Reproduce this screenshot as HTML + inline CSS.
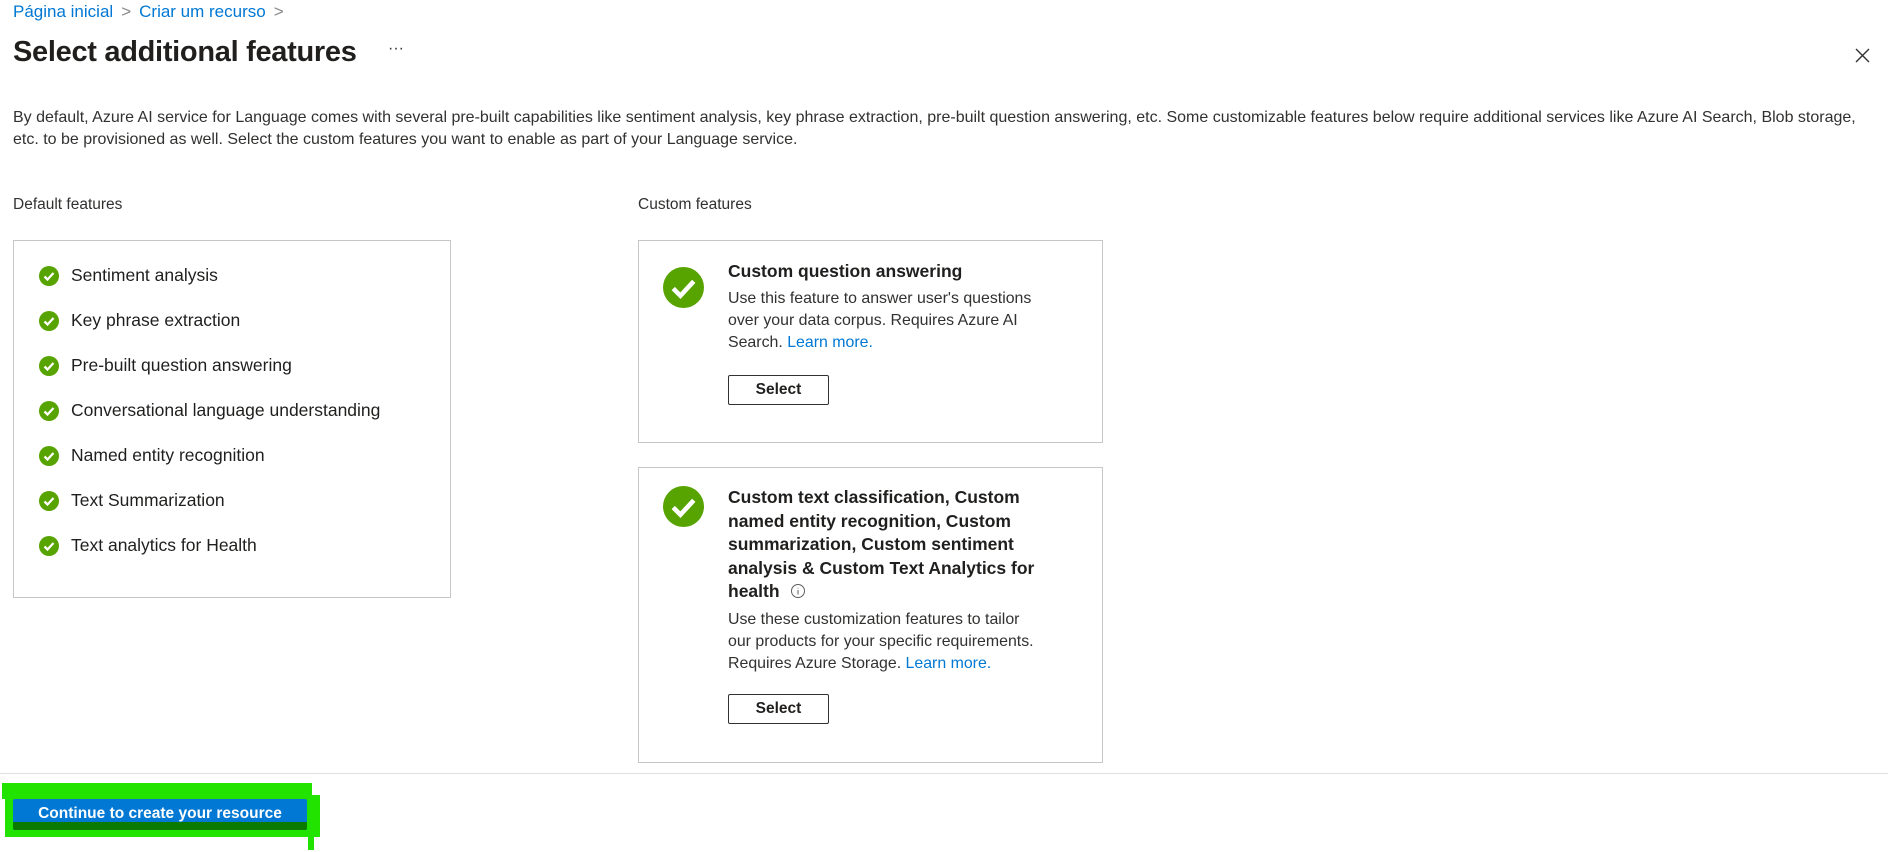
<!DOCTYPE html>
<html><head><meta charset="utf-8"><style>
*{margin:0;padding:0;box-sizing:border-box}
body{width:1888px;height:852px;background:#fff;font-family:"Liberation Sans",sans-serif;color:#323130;position:relative;overflow:hidden}
.a{position:absolute;white-space:nowrap}
.bc{top:2px;left:13px;font-size:17px;color:#0078d4}
.bc span{color:#8a8886;margin:0 8px}
h1{position:absolute;left:13px;top:36px;font-size:29px;font-weight:600;color:#201f1e;letter-spacing:-0.3px}
.desc{position:absolute;left:13px;top:107px;font-size:16px;line-height:22px;color:#323130;white-space:nowrap}
.box{position:absolute;border:1px solid #c8c6c4}
.item{position:absolute;left:71px;font-size:17.5px;color:#201f1e}
.ct{position:absolute;left:728px;font-size:17.5px;font-weight:600;color:#201f1e;line-height:23.5px;white-space:nowrap}
.cb{position:absolute;left:728px;font-size:15.9px;line-height:22px;color:#323130;white-space:nowrap}
.lnk{color:#0078d4}
.sel{position:absolute;left:728px;width:101px;height:30px;border:1px solid #323130;border-radius:2px;font-size:15.5px;font-weight:600;text-align:center;line-height:28px;color:#201f1e}
</style></head><body>
<div class="a bc">Página inicial<span>&gt;</span>Criar um recurso<span>&gt;</span></div>
<h1>Select additional features</h1>
<div class="a" style="left:388px;top:40px;font-size:16px;color:#323130">···</div>
<svg class="a" style="left:1855px;top:48px" width="15" height="15" viewBox="0 0 15 15"><path d="M1 1L14 14M14 1L1 14" stroke="#323130" stroke-width="1.4"/></svg>
<div class="desc">By default, Azure AI service for Language comes with several pre-built capabilities like sentiment analysis, key phrase extraction, pre-built question answering, etc. Some customizable features below require additional services like Azure AI Search, Blob storage,<br>etc. to be provisioned as well. Select the custom features you want to enable as part of your Language service.</div>
<div class="a" style="left:13px;top:196px;font-size:15.5px">Default features</div>
<div class="a" style="left:638px;top:196px;font-size:15.5px">Custom features</div>
<div class="box" style="left:13px;top:240px;width:438px;height:358px"></div>
<div id="items"></div>
<div class="box" style="left:638px;top:240px;width:465px;height:203px"></div>
<div class="box" style="left:638px;top:467px;width:465px;height:296px"></div>
<svg class="a" style="left:663px;top:267px" width="41" height="41" viewBox="0 0 40 40"><circle cx="20" cy="20" r="20" fill="#57a300"/><path d="M10 21l7 7 13-14" stroke="#fff" stroke-width="4.5" fill="none"/></svg>
<svg class="a" style="left:663px;top:486px" width="41" height="41" viewBox="0 0 40 40"><circle cx="20" cy="20" r="20" fill="#57a300"/><path d="M10 21l7 7 13-14" stroke="#fff" stroke-width="4.5" fill="none"/></svg>
<div class="ct" style="top:260px">Custom question answering</div>
<div class="cb" style="top:288px">Use this feature to answer user's questions<br>over your data corpus. Requires Azure AI<br>Search. <span class="lnk">Learn more.</span></div>
<div class="sel" style="top:375px">Select</div>
<div class="ct" style="top:486px">Custom text classification, Custom<br>named entity recognition, Custom<br>summarization, Custom sentiment<br>analysis &amp; Custom Text Analytics for<br>health <svg width="16" height="16" viewBox="0 0 16 16" style="vertical-align:-2px;margin-left:6px"><circle cx="8" cy="8" r="6.5" fill="none" stroke="#605e5c"/><path d="M8 7v4.5M8 4.8v.6" stroke="#605e5c"/></svg></div>
<div class="cb" style="top:609px">Use these customization features to tailor<br>our products for your specific requirements.<br>Requires Azure Storage. <span class="lnk">Learn more.</span></div>
<div class="sel" style="top:694px">Select</div>
<div class="a" style="left:0;top:773px;width:1888px;height:1px;background:#e1dfdd"></div>
<div class="a" style="left:2px;top:783px;width:310px;height:16px;background:#22e300"></div>
<div class="a" style="left:5px;top:795px;width:315px;height:42px;background:#22e300"></div>
<div class="a" style="left:308px;top:820px;width:6px;height:30px;background:#22e300"></div>
<div class="a" style="left:13px;top:799px;width:294px;height:31px;background:#0078d4;border-radius:2px;overflow:hidden"><div style="position:absolute;left:0;right:0;bottom:0;height:8px;background:#0a7a00"></div><div style="position:relative;color:#fff;font-size:15.5px;font-weight:600;text-align:center;line-height:29px">Continue to create your resource</div></div>
<script>
var t=["Sentiment analysis","Key phrase extraction","Pre-built question answering","Conversational language understanding","Named entity recognition","Text Summarization","Text analytics for Health"];
var ys=[276,321,366,411,456,501,546],h="";
for(var i=0;i<7;i++){h+='<svg class="a" style="left:39px;top:'+(ys[i]-10)+'px" width="20" height="20" viewBox="0 0 20 20"><circle cx="10" cy="10" r="10" fill="#57a300"/><path d="M5.5 10.5l3 3 6-6.5" stroke="#fff" stroke-width="2.3" fill="none"/></svg><div class="item" style="top:'+(ys[i]-11)+'px">'+t[i]+'</div>';}
document.getElementById("items").innerHTML=h;
</script>
</body></html>
